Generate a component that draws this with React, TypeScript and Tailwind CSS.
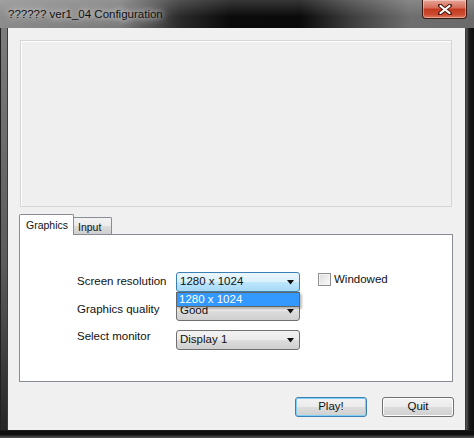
import React from "react";

const font = { fontFamily: '"Liberation Sans", Arial, sans-serif' };

function Arrow() {
  return (
    <svg width="8" height="5" viewBox="0 0 8 5" className="shrink-0">
      <path d="M0 0 H7 L3.5 4.5 Z" fill="#111" />
    </svg>
  );
}

function Select({ value, focused }: { value: string; focused?: boolean }) {
  return (
    <div
      className={
        "h-[20px] w-[124px] rounded-[3px] border flex items-center justify-between pl-[3px] pr-[4px] text-[11.5px] text-[#111] " +
        (focused
          ? "border-[#3c7fb1] bg-[linear-gradient(#eaf6fd,#d9f0fc_50%,#bee6fd_50%,#a7d9f5)]"
          : "border-[#707070] bg-[linear-gradient(#f2f2f2,#ebebeb_50%,#dddddd_50%,#cfcfcf)]")
      }
    >
      <span>{value}</span>
      <Arrow />
    </div>
  );
}

export default function App() {
  return (
    <div className="w-[474px] h-[438px] flex flex-col overflow-hidden bg-[#1c1c1c]" style={font}>
      {/* Title bar */}
      <div className="h-[28px] relative flex items-start bg-[linear-gradient(90deg,#8c8c8c_0px,#7a7a7a_120px,#2a2a2a_180px,#0b0b0b_230px,#0a0a0a_300px,#3c3c3c_350px,#6e6e6e_410px,#6a6a6a_474px)]">
        <div className="absolute inset-0 bg-[linear-gradient(rgba(255,255,255,0.18),rgba(255,255,255,0)_60%)]" />
        <span className="relative ml-[8px] mt-[7px] text-[11.5px] text-[#111] leading-[14px] [text-shadow:0_0_6px_#fff,0_0_12px_#ddd]">
          ?????? ver1_04 Configuration
        </span>
        <div className="absolute left-[422px] top-0 w-[45px] h-[19px] rounded-b-[4px] border border-t-0 border-[#3b1a14] bg-[linear-gradient(#e9a597,#d46a55_45%,#c3391f_50%,#cc4a2e_80%,#e07a5a)] flex items-center justify-center shadow-[inset_0_0_0_1px_rgba(255,255,255,0.35)]">
          <svg width="14" height="11" viewBox="0 0 14 11">
            <path d="M2 1.5 L12 9.5 M12 1.5 L2 9.5" stroke="#4a1a10" strokeWidth="4" strokeLinecap="round" />
            <path d="M2.5 2 L11.5 9 M11.5 2 L2.5 9" stroke="#fff" strokeWidth="2.2" strokeLinecap="round" />
          </svg>
        </div>
      </div>

      {/* Body */}
      <div className="flex flex-1">
        <div className="w-[8px] border-l border-l-[#222] bg-[linear-gradient(#7c7c7c,#5a5a5a_60%,#262626)] border-r border-r-[#3a3a3a]" />
        <div className="w-[457px] bg-[#f0f0f0] flex flex-col pl-[11px] pr-[13px] pt-[12px]">
          {/* empty top panel */}
          <div className="ml-[1px] h-[167px] border border-[#d6d6d6] shadow-[inset_1px_1px_0_#fff] bg-[#efefef]" />

          {/* tabs */}
          <div className="mt-[7px] flex items-end h-[20px] relative z-10">
            <div className="h-[21px] w-[55px] -mb-px bg-white border border-b-0 border-[#898c95] rounded-t-[2px] flex items-start pl-[6px] pt-[3px] text-[10.5px] text-[#111]">
              Graphics
            </div>
            <div className="h-[17px] w-[38px] border border-l-0 border-b-0 border-[#898c95] rounded-tr-[2px] bg-[linear-gradient(#f2f2f2,#ebebeb_50%,#dddddd_50%,#cfcfcf)] flex items-start pl-[4px] pt-[2px] text-[10.5px] text-[#111]">
              Input
            </div>
          </div>
          <div className="h-[148px] w-[434px] border border-[#898c95] bg-white pl-[57px] pt-[37px]">
            <div className="grid grid-cols-[99px_124px_auto] gap-y-[9px] items-center text-[11.5px] text-[#111]">
              <span>Screen resolution</span>
              <div className="relative">
                <Select value="1280 x 1024" focused />
                <div className="absolute left-0 top-[20px] w-[124px] h-[15px] border border-[#646464] bg-[#3399ff] text-white text-[11.5px] leading-[13px] pl-[2px] z-20 shadow-[2px_2px_2px_rgba(0,0,0,0.25)]">
                  1280 x 1024
                </div>
              </div>
              <div className="flex items-center ml-[18px] -mt-[5px]">
                <div className="w-[13px] h-[13px] border border-[#8e8f8f] bg-[linear-gradient(135deg,#dcdcdc,#fbfbfb)] shadow-[inset_0_0_0_1px_#f4f4f4]" />
                <span className="ml-[3px]">Windowed</span>
              </div>

              <span className="-mt-[3px]">Graphics quality</span>
              <Select value="Good" />
              <span />

              <span className="-mt-[7px]">Select monitor</span>
              <Select value="Display 1" />
              <span />
            </div>
          </div>

          {/* buttons */}
          <div className="mt-[15px] flex justify-end gap-[15px] -mr-[2px]">
            <div className="w-[72px] h-[20px] rounded-[3px] border border-[#3c7fb1] bg-[linear-gradient(#f2f2f2,#ebebeb_50%,#dddddd_50%,#cfcfcf)] shadow-[inset_0_0_0_1px_#7fd0f7] flex items-center justify-center text-[11.5px] text-[#111]">
              Play!
            </div>
            <div className="w-[72px] h-[20px] rounded-[3px] border border-[#707070] bg-[linear-gradient(#f2f2f2,#ebebeb_50%,#dddddd_50%,#cfcfcf)] shadow-[inset_0_0_0_1px_#fcfcfc] flex items-center justify-center text-[11.5px] text-[#111]">
              Quit
            </div>
          </div>
        </div>
        <div className="w-[9px] border-l border-l-[#3a3a3a] bg-[linear-gradient(90deg,#5a5a5a,#1a1a1a_40%,#0e0e0e)]" />
      </div>
      <div className="h-[8px] border-t border-t-[#1a1a1a] bg-[linear-gradient(#0e0e0e_50%,#5a5a5a)]" />
    </div>
  );
}
